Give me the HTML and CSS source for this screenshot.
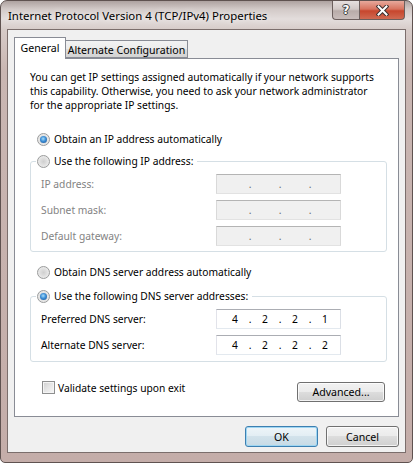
FILE: index.html
```html
<!DOCTYPE html>
<html>
<head>
<meta charset="utf-8">
<link rel="stylesheet" href="styles.css">
</head>
<body>
<div class="window">
  <div class="titlebar">
    <span class="title">Internet Protocol Version 4 (TCP/IPv4) Properties</span>
    <div class="caption-btns">
      <span class="cbtn help">?</span>
      <span class="cbtn close">
        <svg width="13" height="11" viewBox="0 0 13 11"><path d="M2.5 1.5 L10.5 9.5 M10.5 1.5 L2.5 9.5" stroke="#3a3030" stroke-width="4" stroke-linecap="square"/><path d="M2.5 1.5 L10.5 9.5 M10.5 1.5 L2.5 9.5" stroke="#ffffff" stroke-width="2" stroke-linecap="square"/></svg>
      </span>
    </div>
  </div>
  <div class="client">
    <div class="tabs">
      <span class="tab active">General</span>
      <span class="tab">Alternate Configuration</span>
    </div>
    <div class="panel">
      <p class="desc">You can get IP settings assigned automatically if your network supports<br>this capability. Otherwise, you need to ask your network administrator<br>for the appropriate IP settings.</p>
      <div class="option opt-ip-auto"><span class="radio on"></span>Obtain an IP address automatically</div>
      <fieldset class="group group-ip">
        <legend class="option legend"><span class="radio"></span>Use the following IP address:</legend>
        <div class="field disabled"><span class="label">IP address:</span><span class="ip off"><span class="seg"></span><span class="dot">.</span><span class="seg"></span><span class="dot">.</span><span class="seg"></span><span class="dot">.</span><span class="seg"></span></span></div>
        <div class="field disabled"><span class="label">Subnet mask:</span><span class="ip off"><span class="seg"></span><span class="dot">.</span><span class="seg"></span><span class="dot">.</span><span class="seg"></span><span class="dot">.</span><span class="seg"></span></span></div>
        <div class="field disabled"><span class="label">Default gateway:</span><span class="ip off"><span class="seg"></span><span class="dot">.</span><span class="seg"></span><span class="dot">.</span><span class="seg"></span><span class="dot">.</span><span class="seg"></span></span></div>
      </fieldset>
      <div class="option opt-dns-auto"><span class="radio"></span>Obtain DNS server address automatically</div>
      <fieldset class="group group-dns">
        <legend class="option legend"><span class="radio on"></span>Use the following DNS server addresses:</legend>
        <div class="field"><span class="label">Preferred DNS server:</span><span class="ip"><span class="seg">4</span><span class="dot">.</span><span class="seg">2</span><span class="dot">.</span><span class="seg">2</span><span class="dot">.</span><span class="seg">1</span></span></div>
        <div class="field"><span class="label">Alternate DNS server:</span><span class="ip"><span class="seg">4</span><span class="dot">.</span><span class="seg">2</span><span class="dot">.</span><span class="seg">2</span><span class="dot">.</span><span class="seg">2</span></span></div>
      </fieldset>
      <div class="footer">
        <label class="check"><span class="box"></span>Validate settings upon exit</label>
        <button class="btn adv">Advanced...</button>
      </div>
    </div>
    <div class="actions">
      <button class="btn default">OK</button>
      <button class="btn">Cancel</button>
    </div>
  </div>
</div>
</body>
</html>
```
FILE: styles.css
```css
html, body {
  margin: 0;
  background: #ffffff;
}
body {
  font-family: "Noto Sans", "Liberation Sans", sans-serif;
  font-size: 10.25px;
  color: #000;
}
.window {
  box-sizing: border-box;
  width: 413px;
  height: 463px;
  border: 1px solid #5f5250;
  border-radius: 7px 7px 5px 5px;
  padding: 0 6px 9px;
  display: flex;
  flex-direction: column;
  background: linear-gradient(180deg, #aea2a0 0px, #d2c9c7 8px, #e3dddc 18px, #d6cbc8 29px, #c9b6b2 70px, #c4ada9 100%);
}
.titlebar {
  height: 28px;
  display: flex;
  align-items: flex-start;
  padding-left: 1px;
}
.title {
  margin-top: 8px;
  line-height: 14px;
  font-size: 11.4px;
  text-shadow: 0 0 6px rgba(255,255,255,0.9);
}
.caption-btns {
  margin-left: auto;
  margin-right: 1px;
  display: flex;
}
.cbtn {
  box-sizing: border-box;
  height: 19px;
  display: flex;
  align-items: center;
  justify-content: center;
  border: 1px solid #6c5f5d;
  border-top: none;
}
.help {
  width: 27px;
  border-right: none;
  border-radius: 0 0 0 4px;
  background: linear-gradient(180deg, #e6e0df 0%, #d2c8c6 45%, #b9aca9 55%, #c9bdbb 100%);
  color: #fff;
  font-family: "DejaVu Sans", sans-serif;
  font-weight: bold;
  font-size: 12px;
  text-shadow: 0 0 1px #333, 1px 0 0 #444, -1px 0 0 #444, 0 1px 0 #444, 0 -1px 0 #444;
}
.close {
  width: 46px;
  border-radius: 0 0 4px 0;
  background: linear-gradient(180deg, #e7a99c 0%, #d7735f 45%, #c7462d 55%, #d06a52 100%);
}
.client {
  flex: 1;
  border: 1px solid #7b6e6c;
  background: #f0f0f0;
  padding: 7px 6px 0;
  display: flex;
  flex-direction: column;
}
.tabs {
  display: flex;
  align-items: flex-end;
  height: 22px;
  margin-bottom: -1px;
  position: relative;
  z-index: 1;
}
.tab {
  box-sizing: border-box;
  display: flex;
  align-items: center;
  justify-content: center;
  border: 1px solid #898c95;
  font-size: 10.6px;
}
.tab.active {
  width: 52px;
  height: 22px;
  border-bottom: none;
  background: #fff;
  padding-bottom: 1px;
}
.tab:not(.active) {
  width: 122px;
  height: 18px;
  margin-bottom: 1px;
  border-left: none;
  padding-top: 1px;
  background: linear-gradient(180deg, #f2f2f2 0%, #ebebeb 50%, #dddddd 50%, #d3d3d3 100%);
}
.panel {
  box-sizing: border-box;
  height: 359px;
  border: 1px solid #898c95;
  background: #fff;
  padding: 11px 11px 0 15px;
}
.desc {
  margin: 0;
  line-height: 14px;
}
.option {
  display: flex;
  align-items: center;
  height: 16px;
  margin-left: 7px;
}
.opt-ip-auto { margin-top: 19px; }
.opt-dns-auto { margin-top: 12px; }
.radio {
  box-sizing: border-box;
  width: 13px;
  height: 13px;
  margin-right: 4px;
  border-radius: 50%;
  border: 1px solid #9a9b9b;
  background: radial-gradient(circle at 50% 50%, #cfcfcf 0, #dedede 40%, #f6f6f6 100%);
  display: flex;
  align-items: center;
  justify-content: center;
}
.radio.on::after {
  content: "";
  width: 7px;
  height: 7px;
  border-radius: 50%;
  background: radial-gradient(circle at 45% 40%, #a6dcf9 0, #3c8ed6 45%, #1a4f8f 100%);
}
.group {
  margin: 6px 0 0;
  padding: 5px 10px 5px;
  border: 1px solid #d5dfe5;
  border-radius: 3px;
  min-width: 0;
}
.group-dns { margin-top: 8px; padding-bottom: 6px; }
.legend {
  padding: 0 4px 0 1px;
  margin-left: -5px;
}
.field {
  display: flex;
  align-items: center;
  height: 20px;
}
.field + .field { margin-top: 6px; }
.label { width: 175px; }
.field.disabled .label { color: #838383; }
.ip {
  box-sizing: border-box;
  width: 125px;
  height: 20px;
  border: 1px solid;
  border-color: #abadb3 #dbdfe6 #e3e9ef #e2e3ea;
  background: #fff;
  display: flex;
  align-items: center;
  padding-left: 5px;
}
.ip.off {
  background: #f0f0f0;
  border-color: #b4b4b4 #d9d9d9 #e2e2e2 #d9d9d9;
  color: #6d6d6d;
}
.seg {
  width: 26px;
  text-align: center;
}
.dot {
  width: 4px;
  text-align: center;
}
.footer {
  display: flex;
  justify-content: space-between;
  align-items: flex-start;
  margin-top: 19px;
}
.check {
  display: flex;
  align-items: center;
  height: 13px;
  margin-left: 12px;
}
.box {
  box-sizing: border-box;
  width: 13px;
  height: 13px;
  margin-right: 3px;
  border: 1px solid #8e8f8f;
  background: linear-gradient(135deg, #cfcfcf 0%, #e6e6e6 50%, #f7f7f7 100%);
  box-shadow: inset 0 0 0 1px #f4f4f4;
}
.btn {
  box-sizing: border-box;
  width: 73px;
  height: 21px;
  padding: 0;
  border: 1px solid #707070;
  border-radius: 3px;
  background: linear-gradient(180deg, #f2f2f2 0%, #ebebeb 50%, #dddddd 50%, #cfcfcf 100%);
  box-shadow: inset 0 0 0 1px rgba(255,255,255,0.75);
  font: inherit;
  font-size: 10.6px;
  color: #000;
}
.adv {
  width: 88px;
  height: 20px;
  margin-top: 1px;
  margin-right: 2px;
}
.btn.default {
  border-color: #3c7fb1;
  box-shadow: inset 0 0 0 1px #9fd6f2;
  background: linear-gradient(180deg, #eef5f9 0%, #e2edf3 50%, #d2e2eb 50%, #c7dae5 100%);
}
.actions {
  display: flex;
  justify-content: flex-end;
  gap: 8px;
  margin-top: 9px;
}
```
